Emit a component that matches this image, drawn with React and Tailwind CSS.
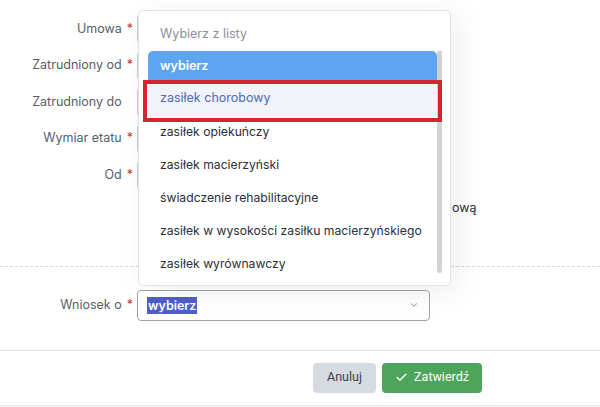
import { Check, ChevronDown } from 'lucide-react'

const rows = [
  { label: 'Umowa', required: true },
  { label: 'Zatrudniony od', required: true },
  { label: 'Zatrudniony do', required: false },
  { label: 'Wymiar etatu', required: true },
  { label: 'Od', required: true },
]

const options = [
  'zasiłek opiekuńczy',
  'zasiłek macierzyński',
  'świadczenie rehabilitacyjne',
  'zasiłek w wysokości zasiłku macierzyńskiego',
  'zasiłek wyrównawczy',
]

function Label({ label, required }) {
  return (
    <div className="w-[137px] shrink-0 pr-[4px] text-right text-[12.5px] text-[#585e66]">
      {label}
      {required ? (
        <span className="ml-[5px] text-[#c0392b]">*</span>
      ) : (
        <span className="ml-[5px] invisible">*</span>
      )}
    </div>
  )
}

function Dropdown() {
  return (
    <div className="absolute left-[138px] top-[10px] w-[313px] h-[276px] rounded-[5px] border border-[#dfe2e6] bg-white shadow-[8px_6px_30px_rgba(0,0,0,0.07)] overflow-hidden">
      <div className="h-[40px] pl-[21px] pt-[6px] flex items-center text-[12.5px] text-[#8a9098]">
        Wybierz z listy
      </div>
      <div className="flex pl-[9px] pr-[8px]">
        <div className="flex-1">
          <div className="h-[30px] flex items-center pl-[12px] rounded-t-[5px] bg-[#5ea5f1] text-[12.5px] font-semibold text-white">
            wybierz
          </div>
          <div className="h-[35px] flex items-center pl-[12px] bg-[#f1f3f8] text-[12.5px] text-[#4b6db3]">
            zasiłek chorobowy
          </div>
          {options.map((o) => (
            <div key={o} className="h-[33px] flex items-center pl-[12px] text-[12.2px] text-[#2a2f36] whitespace-nowrap">
              {o}
            </div>
          ))}
        </div>
        <div className="w-[5px] h-[222px] bg-[#d0d2d5] rounded-b-sm" />
      </div>
      <div className="absolute left-[4px] top-[69px] w-[299px] h-[42px] border-[4px] border-[#d7232e]" />
    </div>
  )
}

export default function App() {
  return (
    <div className="relative w-[600px] h-[407px] bg-white overflow-hidden font-['Inter',sans-serif]">
      <div className="pt-[14px] flex flex-col gap-[6.5px]">
        {rows.map((r) => (
          <div key={r.label} className="flex items-center h-[30px]">
            <Label {...r} />
            <div className="w-[293px] h-[30px] rounded-[4px] border border-[#c9ced4] bg-white" />
          </div>
        ))}
        <div className="flex items-center h-[30px] mt-[-3px]">
          <div className="w-[137px] shrink-0" />
          <div className="w-[315px] shrink-0" />
          <span className="text-[12.5px] text-[#2a2f36]">ową</span>
        </div>
      </div>

      <div className="mt-[42px] border-t border-dashed border-[#d6d9dd]" />

      <div className="mt-[23px] flex items-center h-[31px]">
        <Label label="Wniosek o" required />
        <div className="w-[293px] h-[31px] rounded-[4px] border border-[#9ea4ab] bg-white flex items-center pl-[9px] pr-[10px]">
          <span className="bg-[#4f5fc9] text-white text-[12.5px] font-semibold leading-[17px] px-[1px]">wybierz</span>
          <ChevronDown className="ml-auto w-[10px] h-[10px] text-[#6b7178]" strokeWidth={2} />
        </div>
      </div>

      <div className="mt-[29px] border-t border-[#e1e4e8]" />

      <div className="flex justify-end gap-[6px] pr-[118px] pt-[12px] h-[54px]">
        <button className="w-[63px] h-[30px] rounded-[4px] bg-[#d5dbe1] text-[12.5px] text-[#3b4148] font-['Roboto',sans-serif]">
          Anuluj
        </button>
        <button className="w-[100px] h-[30px] rounded-[4px] bg-[#4ca55a] text-[12.5px] text-white flex items-center justify-center gap-[6px] font-['Roboto',sans-serif]">
          <Check className="w-[13px] h-[13px]" strokeWidth={2.5} />
          Zatwierdź
        </button>
      </div>
      <div className="border-t border-[#e1e4e8] bg-[#f7f8fa] h-[10px]" />

      <Dropdown />
    </div>
  )
}
